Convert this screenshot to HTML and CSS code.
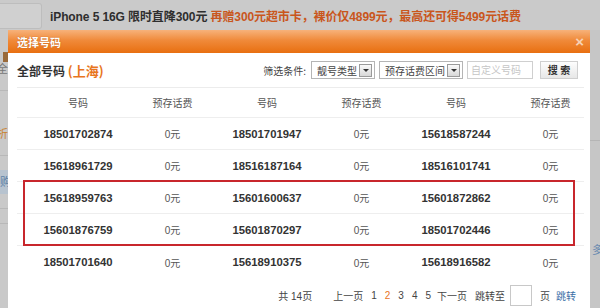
FILE: index.html
```html
<!DOCTYPE html>
<html lang="zh">
<head>
<meta charset="utf-8">
<title>选择号码</title>
<link rel="stylesheet" href="styles.css">
</head>
<body>
<div class="top">
  <div class="top-box"></div>
  <div class="headline"><span class="hl-dark">iPhone 5 16G 限时直降300元</span> <span class="hl-orange">再赠300元超市卡，裸价仅4899元，最高还可得5499元话费</span></div>
</div>
<div class="stage">
  <div class="side-left">
    <div class="sl-tab"></div>
    <div class="sl-char">全</div>
    <div class="sl-line"></div>
    <div class="sl-char sl-orange">折</div>
    <div class="sl-line"></div>
    <div class="sl-blue">购</div>
    <div class="sl-line"></div>
    <div class="sl-line"></div>
  </div>
  <div class="dialog">
    <div class="dlg-title">
      <span class="dlg-title-text">选择号码</span>
      <span class="dlg-close">×</span>
    </div>
    <div class="dlg-body">
      <div class="toolbar">
        <div class="tb-title">全部号码 <span class="tb-city">(上海)</span></div>
        <div class="filters">
          <span class="f-label">筛选条件:</span>
          <span class="select s1"><span class="s-text">靓号类型</span><span class="s-arrow"></span></span>
          <span class="select s2"><span class="s-text">预存话费区间</span><span class="s-arrow"></span></span>
          <span class="f-input">自定义号码</span>
          <span class="f-btn">搜 索</span>
        </div>
      </div>
      <div class="table">
        <div class="row head">
          <div>号码</div><div>预存话费</div><div>号码</div><div>预存话费</div><div>号码</div><div>预存话费</div>
        </div>
        <div class="row"><div class="num">18501702874</div><div class="fee">0元</div><div class="num">18501701947</div><div class="fee">0元</div><div class="num">15618587244</div><div class="fee">0元</div></div>
        <div class="row"><div class="num">15618961729</div><div class="fee">0元</div><div class="num">18516187164</div><div class="fee">0元</div><div class="num">18516101741</div><div class="fee">0元</div></div>
        <div class="row"><div class="num">15618959763</div><div class="fee">0元</div><div class="num">15601600637</div><div class="fee">0元</div><div class="num">15601872862</div><div class="fee">0元</div></div>
        <div class="row"><div class="num">15601876759</div><div class="fee">0元</div><div class="num">15601870297</div><div class="fee">0元</div><div class="num">18501702446</div><div class="fee">0元</div></div>
        <div class="row last"><div class="num">18501701640</div><div class="fee">0元</div><div class="num">15618910375</div><div class="fee">0元</div><div class="num">15618916582</div><div class="fee">0元</div></div>
        <div class="highlight"></div>
      </div>
      <div class="pager">
        <span>共 14页</span>
        <span class="pg-prev">上一页</span>
        <span>1</span>
        <span class="pg-cur">2</span>
        <span>3</span>
        <span>4</span>
        <span>5</span>
        <span class="pg-next">下一页</span>
        <span>跳转至</span>
        <span class="pg-input"></span>
        <span>页</span>
        <span class="pg-go">跳转</span>
      </div>
    </div>
  </div>
  <div class="side-right">
    <div class="sr-line"></div>
    <div class="sr-char">多</div>
  </div>
</div>
</body>
</html>
```
FILE: styles.css
```css
html, body {
  margin: 0;
  padding: 0;
}
body {
  width: 600px;
  height: 308px;
  overflow: hidden;
  background: #c9c9c9;
  font-family: "Liberation Sans", Arial, "Noto Sans CJK SC", sans-serif;
  color: #333;
}
.top {
  height: 30px;
  display: flex;
  align-items: center;
  background: #cacaca;
}
.top-box {
  width: 41px;
  height: 24px;
  margin-top: 2px;
  background: #d0d0d0;
  border: 1px solid #bdbdbd;
  border-left: none;
  border-radius: 0 3px 3px 0;
}
.headline {
  margin-left: 8px;
  font-size: 12px;
  font-weight: bold;
  white-space: nowrap;
  letter-spacing: -0.1px;
}
.hl-dark { color: #2e2e2e; }
.hl-orange { color: #c9561c; }

.stage {
  display: flex;
  height: 278px;
}
.side-left {
  width: 8px;
  overflow: hidden;
  display: flex;
  flex-direction: column;
  align-items: flex-end;
}
.sl-tab {
  width: 5px;
  height: 10px;
  margin-top: 22px;
  background: #9a6a3a;
}
.sl-char {
  font-size: 11px;
  color: #777;
  width: 12px;
  margin-top: 0;
  line-height: 14px;
  text-align: right;
}
.sl-orange { color: #c9822c; margin-top: 36px; }
.sl-line {
  width: 8px;
  height: 1px;
  background: #b8b8b8;
  margin-top: 14px;
}
.sl-blue {
  width: 8px;
  height: 24px;
  margin-top: 14px;
  background: #b7c3cf;
  color: #5b7fa6;
  font-size: 11px;
  line-height: 24px;
  text-align: right;
  overflow: hidden;
}

.dialog {
  width: 582px;
  display: flex;
  flex-direction: column;
  background: #fff;
}
.dlg-title {
  height: 23px;
  background: linear-gradient(#f7b27a, #f08a3a 45%, #e86f10);
  display: flex;
  align-items: center;
  justify-content: space-between;
  padding: 0 6px 0 9px;
}
.dlg-title-text {
  color: #fff;
  font-size: 11px;
  font-weight: bold;
  text-shadow: 0 0 1px #b04a00;
  font-family: "Noto Sans CJK SC", sans-serif;
}
.dlg-close {
  color: #f6d2b6;
  font-size: 15px;
  font-weight: bold;
  line-height: 1;
}
.dlg-body {
  flex: 1;
  padding: 7px 6px 0 9px;
}
.toolbar {
  height: 20px;
  display: flex;
  align-items: center;
  justify-content: space-between;
  padding-right: 6px;
}
.tb-title {
  font-size: 12px;
  font-weight: bold;
  color: #333;
  font-family: "Noto Sans CJK SC", sans-serif;
}
.tb-city {
  color: #e8761e;
  font-size: 13px;
}
.filters {
  display: flex;
  align-items: center;
  font-size: 10px;
  color: #444;
  font-family: "Noto Sans CJK SC", sans-serif;
}
.f-label { margin-right: 5px; }
.select {
  height: 18px;
  border: 1px solid #b5b5b5;
  box-sizing: border-box;
  display: flex;
  align-items: center;
  justify-content: space-between;
  padding: 0 2px 0 5px;
  margin-right: 4px;
  background: #fff;
}
.s1 { width: 64px; }
.s2 { width: 84px; }
.s-arrow {
  width: 11px;
  height: 11px;
  border: 1px solid #9a9a9a;
  background: linear-gradient(#fafafa, #d8d8d8);
  position: relative;
}
.s-arrow::after {
  content: "";
  position: absolute;
  left: 3px;
  top: 4px;
  border-left: 3px solid transparent;
  border-right: 3px solid transparent;
  border-top: 3px solid #333;
}
.f-input {
  width: 66px;
  height: 18px;
  box-sizing: border-box;
  border: 1px solid #cfcfcf;
  color: #c6c6c6;
  padding-left: 3px;
  line-height: 16px;
  margin-right: 7px;
}
.f-btn {
  width: 38px;
  height: 18px;
  box-sizing: border-box;
  border: 1px solid #cfcfcf;
  background: linear-gradient(#fdfdfd, #e7e7e7);
  text-align: center;
  line-height: 16px;
  font-weight: bold;
  color: #333;
}

.table {
  position: relative;
  width: 567px;
  margin-top: 7px;
  border-top: 1px solid #ececec;
}
.row {
  display: grid;
  grid-template-columns: repeat(3, 122px 67px);
  height: 32px;
  align-items: center;
  border-bottom: 1px solid #eeeeee;
  box-sizing: border-box;
  text-align: center;
}
.row.head {
  height: 30px;
  font-size: 10px;
  color: #555;
  font-family: "Noto Sans CJK SC", sans-serif;
}
.row.last { border-bottom: none; }
.num {
  font-size: 11.3px;
  font-weight: bold;
  color: #333;
}
.fee {
  font-size: 10px;
  color: #555;
  font-family: "Liberation Sans", "Noto Sans CJK SC", sans-serif;
}
.highlight {
  position: absolute;
  left: 6px;
  top: 92px;
  width: 552px;
  height: 66px;
  box-sizing: border-box;
  border: 2px solid #c8262c;
}

.pager {
  margin-top: 6px;
  height: 22px;
  display: flex;
  align-items: center;
  justify-content: flex-end;
  gap: 8px;
  padding-right: 8px;
  font-size: 10px;
  color: #444;
  font-family: "Liberation Sans", "Noto Sans CJK SC", sans-serif;
}
.pg-prev { margin-left: 13px; }
.pg-next { margin-left: -2px; }
.pg-cur { color: #e8761e; }
.pg-input {
  width: 20px;
  height: 19px;
  border: 1px solid #c8c8c8;
  margin-left: -3px;
}
.pg-go { color: #3a6ea5; margin-left: -2px; }

.side-right {
  width: 10px;
  background: #c6c6c6;
  display: flex;
  flex-direction: column;
}
.sr-line {
  height: 1px;
  background: #b5b5b5;
  margin-top: 110px;
}
.sr-char {
  margin-top: 100px;
  margin-left: 2px;
  font-size: 11px;
  color: #6a8ab0;
  font-family: "Noto Sans CJK SC", sans-serif;
  white-space: nowrap;
}
```
